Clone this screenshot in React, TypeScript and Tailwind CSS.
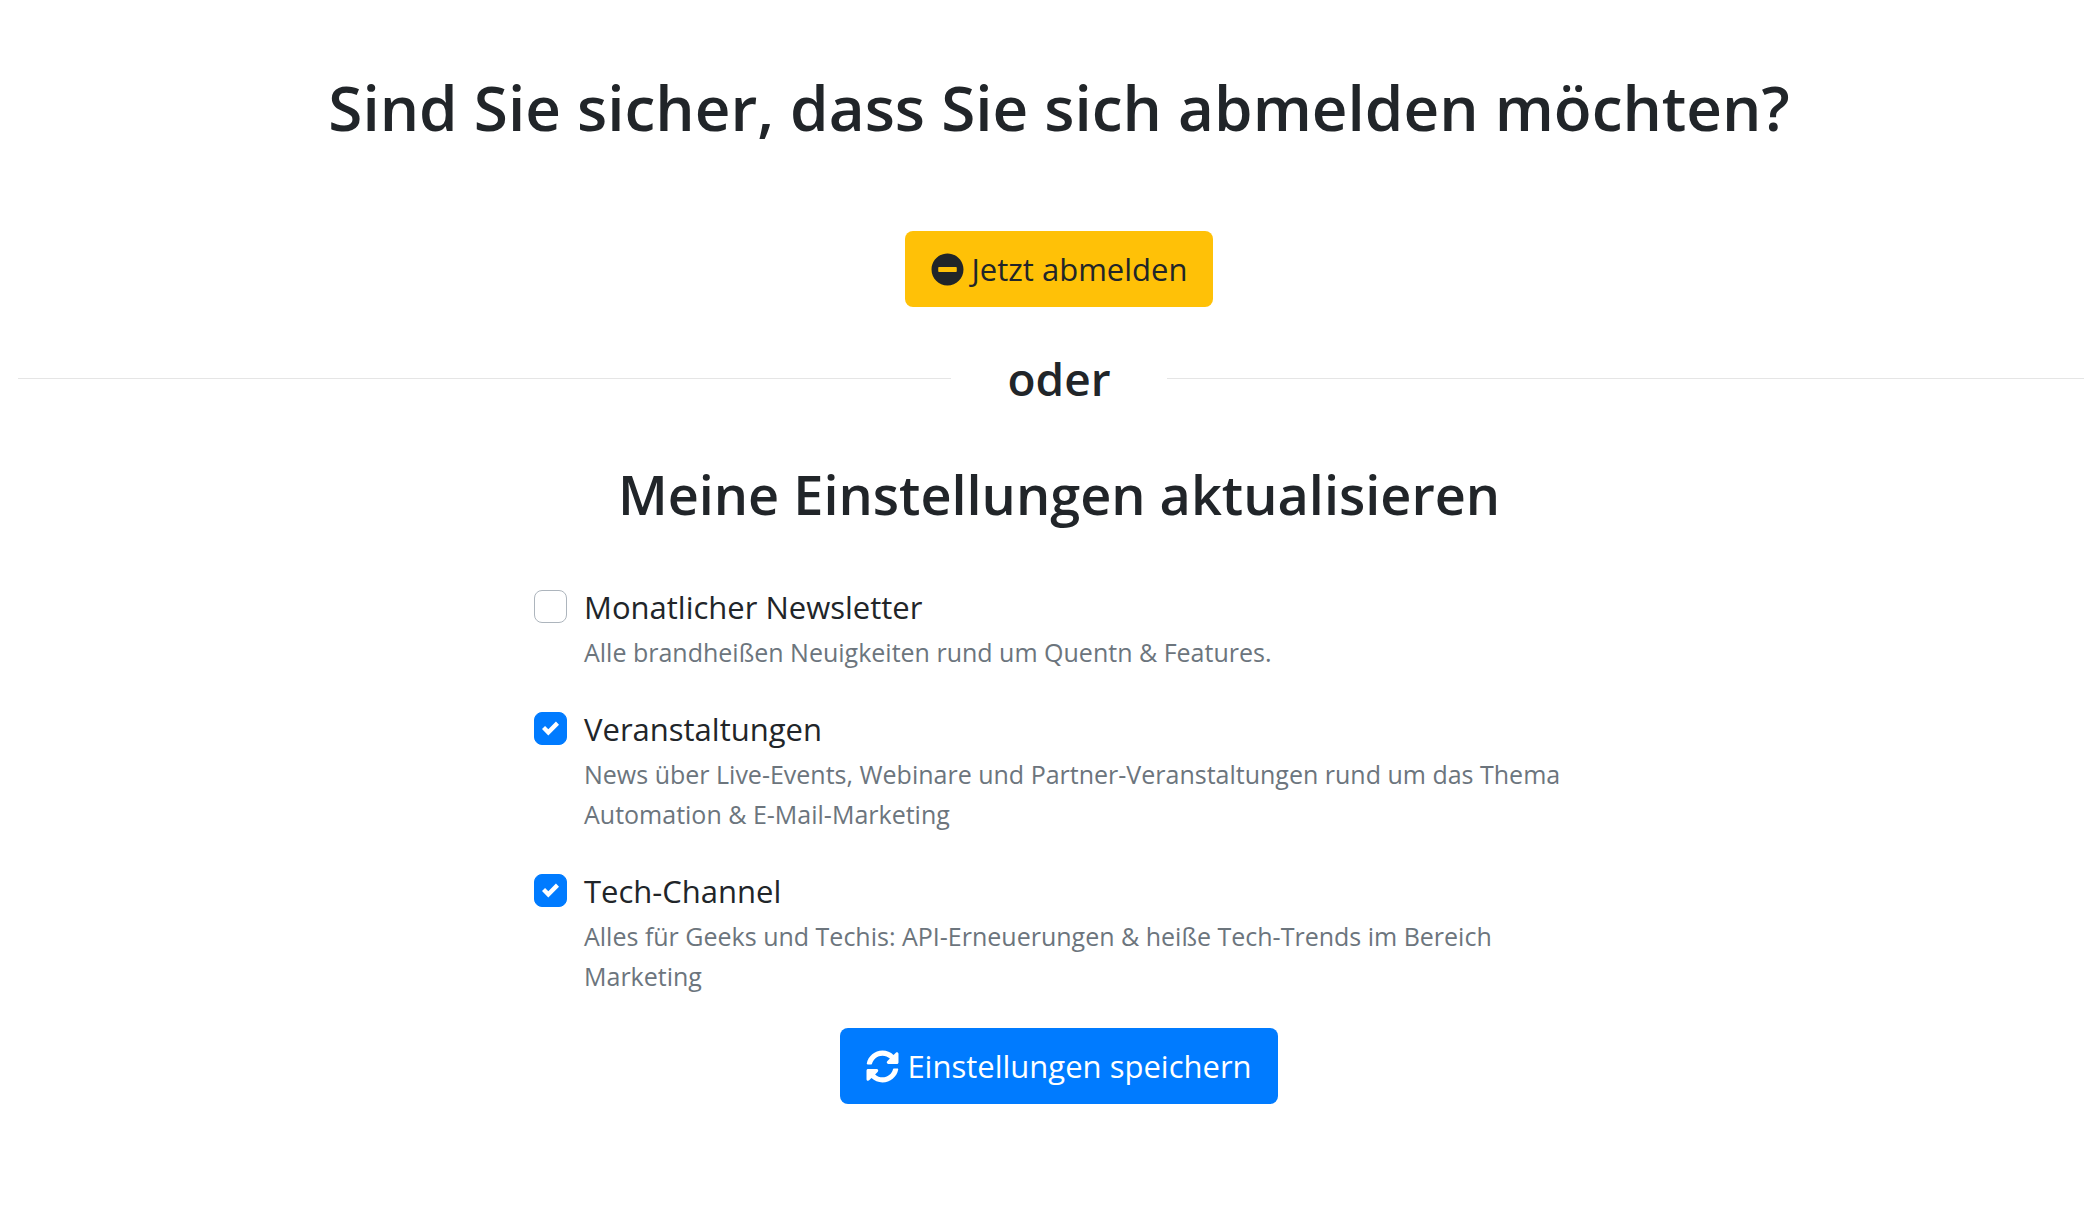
import React, { useState } from 'react';
import { FaMinusCircle, FaSyncAlt } from 'react-icons/fa';

interface Subscription {
    id: string;
    title: string;
    description: string;
    active: boolean;
}

const initialSubscriptions: Subscription[] = [
    {
        id: 'newsletter',
        title: 'Monatlicher Newsletter',
        description: 'Alle brandheißen Neuigkeiten rund um Quentn & Features.',
        active: false
    },
    {
        id: 'events',
        title: 'Veranstaltungen',
        description: 'News über Live-Events, Webinare und Partner-Veranstaltungen rund um das Thema Automation & E-Mail-Marketing',
        active: true
    },
    {
        id: 'tech',
        title: 'Tech-Channel',
        description: 'Alles für Geeks und Techis: API-Erneuerungen & heiße Tech-Trends im Bereich Marketing',
        active: true
    }
];

interface SubscriptionItemProps {
    item: Subscription;
    onToggle: (id: string) => void;
}

const SubscriptionItem: React.FC<SubscriptionItemProps> = ({ item, onToggle }) => (
    <li className="flex items-start gap-[17px]">
        <span className="relative mt-2 h-[33px] w-[33px] shrink-0">
            <input
                type="checkbox"
                id={item.id}
                checked={item.active}
                onChange={() => onToggle(item.id)}
                aria-describedby={`${item.id}-info`}
                className="block h-full w-full cursor-pointer appearance-none rounded-lg border border-[#adb5bd] bg-white checked:border-[#007bff] checked:bg-[#007bff]"
            />
            {item.active && (
                <svg viewBox="0 0 8 8" className="pointer-events-none absolute inset-2 h-[17px] w-[17px] fill-white" aria-hidden="true">
                    <path d="M6.564.75l-3.59 3.612-1.538-1.55L0 4.26 2.974 7.25 8 2.193z" />
                </svg>
            )}
        </span>
        <div className="min-w-0 flex-1">
            <label htmlFor={item.id} className="block cursor-pointer text-[31px] leading-[50px]">{item.title}</label>
            <p id={`${item.id}-info`} className="text-[25px] leading-10 text-[#6c757d]">{item.description}</p>
        </div>
    </li>
);

export default function App() {
    const [subscriptions, setSubscriptions] = useState(initialSubscriptions);

    const toggle = (id: string) => {
        setSubscriptions(subscriptions.map(s => s.id === id ? { ...s, active: !s.active } : s));
    };

    return (
        <div className="overflow-x-hidden bg-white pl-[18px] font-['Open_Sans','Noto_Sans',sans-serif] text-[#212529]">
            <main className="-mr-4 flex flex-col items-center pt-[67px] pb-20">
                <h1 className="text-center text-[62px] leading-[80px] font-semibold">Sind Sie sicher, dass Sie sich abmelden möchten?</h1>

                <button type="button" className="mt-[84px] flex h-[76px] cursor-pointer items-center gap-2 rounded-lg bg-[#ffc107] px-[26px] text-[31px]">
                    <FaMinusCircle className="h-[33px] w-[33px]" />
                    Jetzt abmelden
                </button>

                <div className="mt-11 flex w-full items-center gap-14">
                    <hr className="flex-1 border-[#e5e5e5]" />
                    <h3 className="text-[46px] leading-[54px] font-semibold">oder</h3>
                    <hr className="flex-1 border-[#e5e5e5]" />
                </div>

                <h2 className="mt-14 text-center text-[54px] leading-[66px] font-semibold">Meine Einstellungen aktualisieren</h2>

                <form onSubmit={e => e.preventDefault()} className="mt-[55px] flex w-full max-w-[1050px] flex-col items-center gap-8">
                    <ul className="flex w-full flex-col gap-8">
                        {subscriptions.map(item => (
                            <SubscriptionItem key={item.id} item={item} onToggle={toggle} />
                        ))}
                    </ul>
                    <button type="submit" className="flex h-[76px] cursor-pointer items-center gap-2 rounded-lg bg-[#007bff] px-[26px] text-[31px] text-white">
                        <FaSyncAlt className="h-[33px] w-[33px]" />
                        Einstellungen speichern
                    </button>
                </form>
            </main>
        </div>
    );
}
